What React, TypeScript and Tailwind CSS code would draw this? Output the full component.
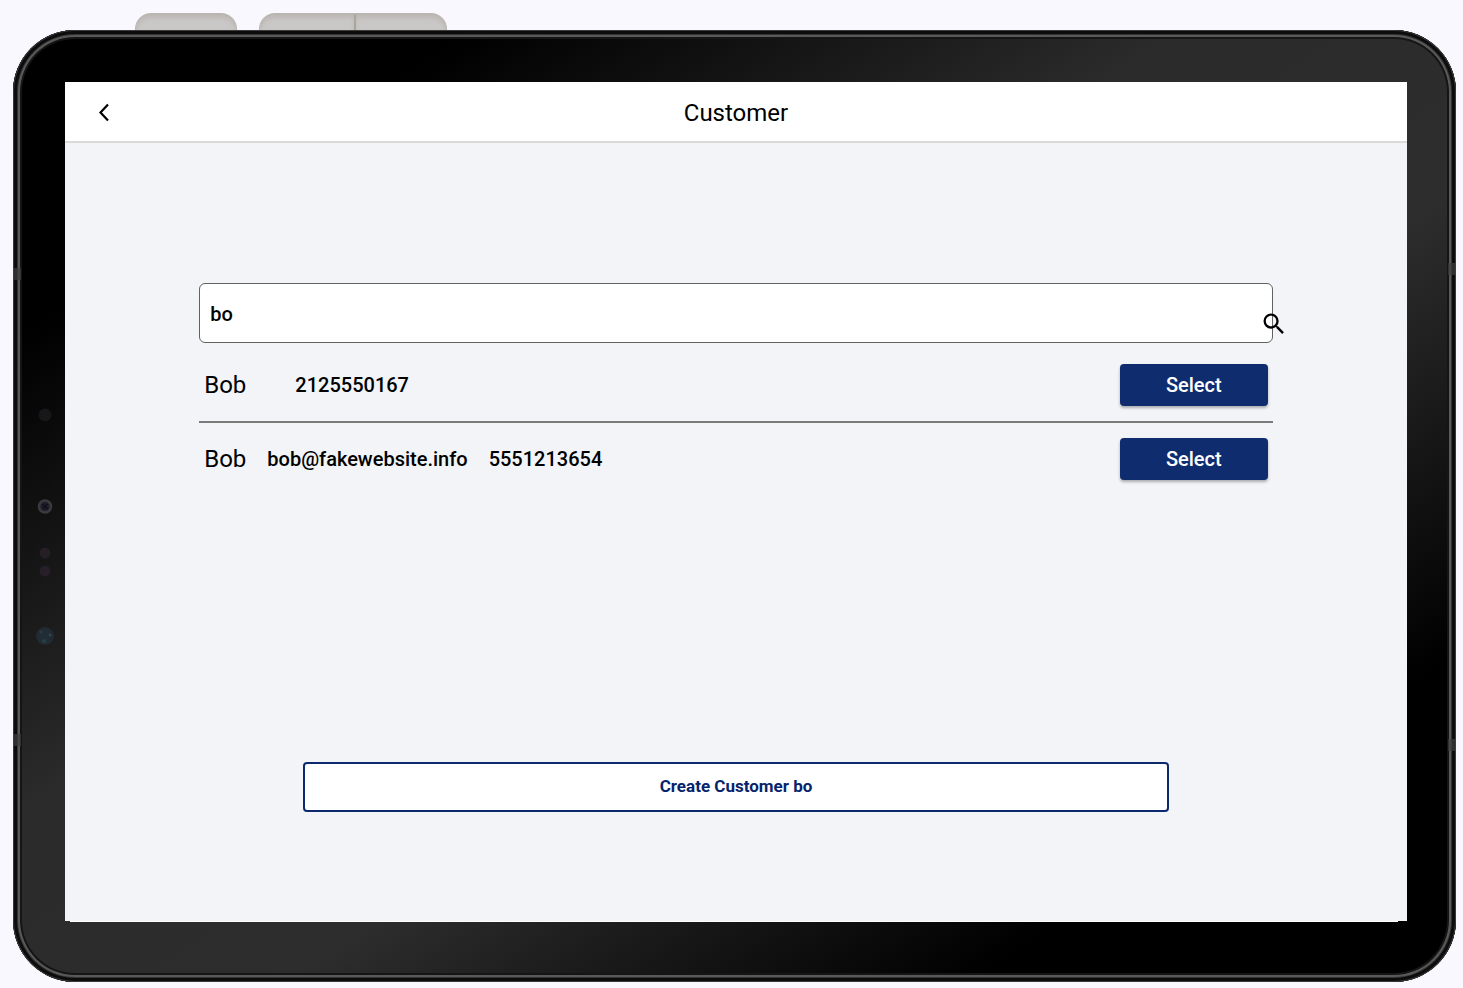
import { useState } from "react";
import { MdSearch } from "react-icons/md";

type Customer = { id: number; name: string; email: string; phone: string };

const customers: Customer[] = [
  { id: 1, name: "Bob", email: "", phone: "2125550167" },
  { id: 2, name: "Bob", email: "bob@fakewebsite.info", phone: "5551213654" },
];

// Power and volume keys sticking out above the tablet
function SideKeys() {
  const key = "h-full border-t-2 border-[#bab5b1] bg-[#c9c8c6] shadow-[inset_0_3px_4px_#bcb7b3]";
  return (
    <div className="flex h-[17px] gap-[22px] pl-[122px]" aria-hidden="true">
      <div className={`${key} w-[102px] rounded-t-2xl border-x`} />
      <div className="flex h-full">
        <div className={`${key} w-[97px] rounded-tl-2xl border-l border-r-2 border-r-[#aaa49f]`} />
        <div className={`${key} w-[91px] rounded-tr-2xl border-r`} />
      </div>
    </div>
  );
}

// Cameras and light sensors in the left bezel
function Sensors() {
  return (
    <svg width="24" height="288" viewBox="0 0 24 288" aria-hidden="true">
      <circle cx="12" cy="53" r="6.500" fill="#17171a" />
      <circle cx="12" cy="144.500" r="6" fill="#211d2c" stroke="#3a3a3b" strokeWidth="2.500" />
      <path d="M9 142l3 2 3-2M10 147l2-3 3 3" stroke="#12101a" strokeWidth="1.500" fill="none" />
      <circle cx="12" cy="191" r="5.500" fill="#261e25" />
      <circle cx="12" cy="209" r="5.500" fill="#261e28" />
      <circle cx="12" cy="274" r="9" fill="#242a2f" />
      <circle cx="12" cy="274" r="7" fill="#212c35" />
      <circle cx="17" cy="273" r="1.500" fill="#26475a" />
      <circle cx="11" cy="279" r="2" fill="#204348" />
      <circle cx="8" cy="270" r="1.500" fill="#263c4c" />
    </svg>
  );
}

function CustomerRow({ customer }: { customer: Customer }) {
  return (
    <li className="flex items-center justify-between border-b-2 border-[#7b7b7b] px-[5px] py-[15px] last:border-b-0">
      <div className="flex items-center gap-[21px]">
        <span className="text-2xl">{customer.name}</span>
        <span className="min-w-[7px] text-xl font-medium">{customer.email}</span>
        <span className="text-xl font-medium">{customer.phone}</span>
      </div>
      <button
        type="button"
        className="h-[42px] w-[148px] rounded-[4px] bg-[#0e2c6e] text-xl font-medium text-white shadow-[0_2px_3px_rgba(0,0,0,0.3)]"
      >
        Select
      </button>
    </li>
  );
}

export default function App() {
  const [query, setQuery] = useState("bo");

  return (
    <div className="flex min-h-screen flex-col bg-[#f9f8fe] pt-[13px] pr-[7px] pb-[6px] pl-[13px] font-[Roboto,sans-serif] text-black">
      <SideKeys />

      {/* Tablet body */}
      <div className="relative flex flex-1 rounded-[62px] bg-[linear-gradient(146deg,#000_16%,#2b2b2b_41%,#2d2d2d_59%,#000_83%)] pt-[52px] pr-[49px] pb-[60px] shadow-[inset_0_0_0_1px_#3a3a3a,inset_0_0_0_4px_#0c0c0c,inset_0_0_0_5px_#333,inset_0_0_0_7px_#595959,inset_0_0_0_9px_#151515]">
        {/* Antenna bands */}
        <div className="absolute top-[25%] left-0 h-3 w-2 bg-[#3f3f3f]/70" />
        <div className="absolute top-[74%] left-0 h-3 w-2 bg-[#3f3f3f]/70" />
        <div className="absolute top-[24.5%] right-0 h-3 w-2 bg-[#3f3f3f]/70" />
        <div className="absolute top-[74.5%] right-0 h-3 w-2 bg-[#3f3f3f]/70" />

        <div className="-mt-[52px] -mb-[60px] flex w-[52px] items-center justify-center pl-3">
          <Sensors />
        </div>

        {/* Screen */}
        <div className="flex flex-1 flex-col">
          <div className="flex flex-1 flex-col bg-[#f2f4f8]">
            <header className="grid h-[61px] grid-cols-[1fr_auto_1fr] items-center border-b-2 border-[#dadada] bg-white">
              <button type="button" aria-label="Back" className="ml-6 flex h-8 w-8 items-center justify-center">
                <svg width="14" height="20" viewBox="0 0 14 20" fill="none" stroke="currentColor" strokeWidth="2.200">
                  <path d="M10 2.500L2.500 10.500L10 18.500" />
                </svg>
              </button>
              <h1 className="pt-0.5 text-2xl">Customer</h1>
            </header>

            <main className="flex flex-1 flex-col px-[10%] pt-[140px] pb-[109px]">
              <div className="relative">
                <input
                  type="text"
                  aria-label="Search customers"
                  value={query}
                  onChange={(e) => setQuery(e.target.value)}
                  className="h-[60px] w-full rounded-md border border-[#626262] bg-white px-[10px] pt-0.5 text-xl font-medium outline-none"
                />
                <button type="button" aria-label="Search" className="absolute top-[27px] -right-[15px]">
                  <MdSearch size={28} />
                </button>
              </div>

              <ul className="pt-[6px]">
                {customers.map((customer) => (
                  <CustomerRow key={customer.id} customer={customer} />
                ))}
              </ul>

              <button
                type="button"
                className="mx-[104px] mt-auto h-[50px] rounded-[4px] border-2 border-[#0b296d] bg-white text-[17px] font-bold text-[#06246b]"
              >
                Create Customer {query}
              </button>
            </main>
          </div>
          <div className="mr-[9px] ml-[5px] h-px bg-white" />
        </div>
      </div>
    </div>
  );
}
